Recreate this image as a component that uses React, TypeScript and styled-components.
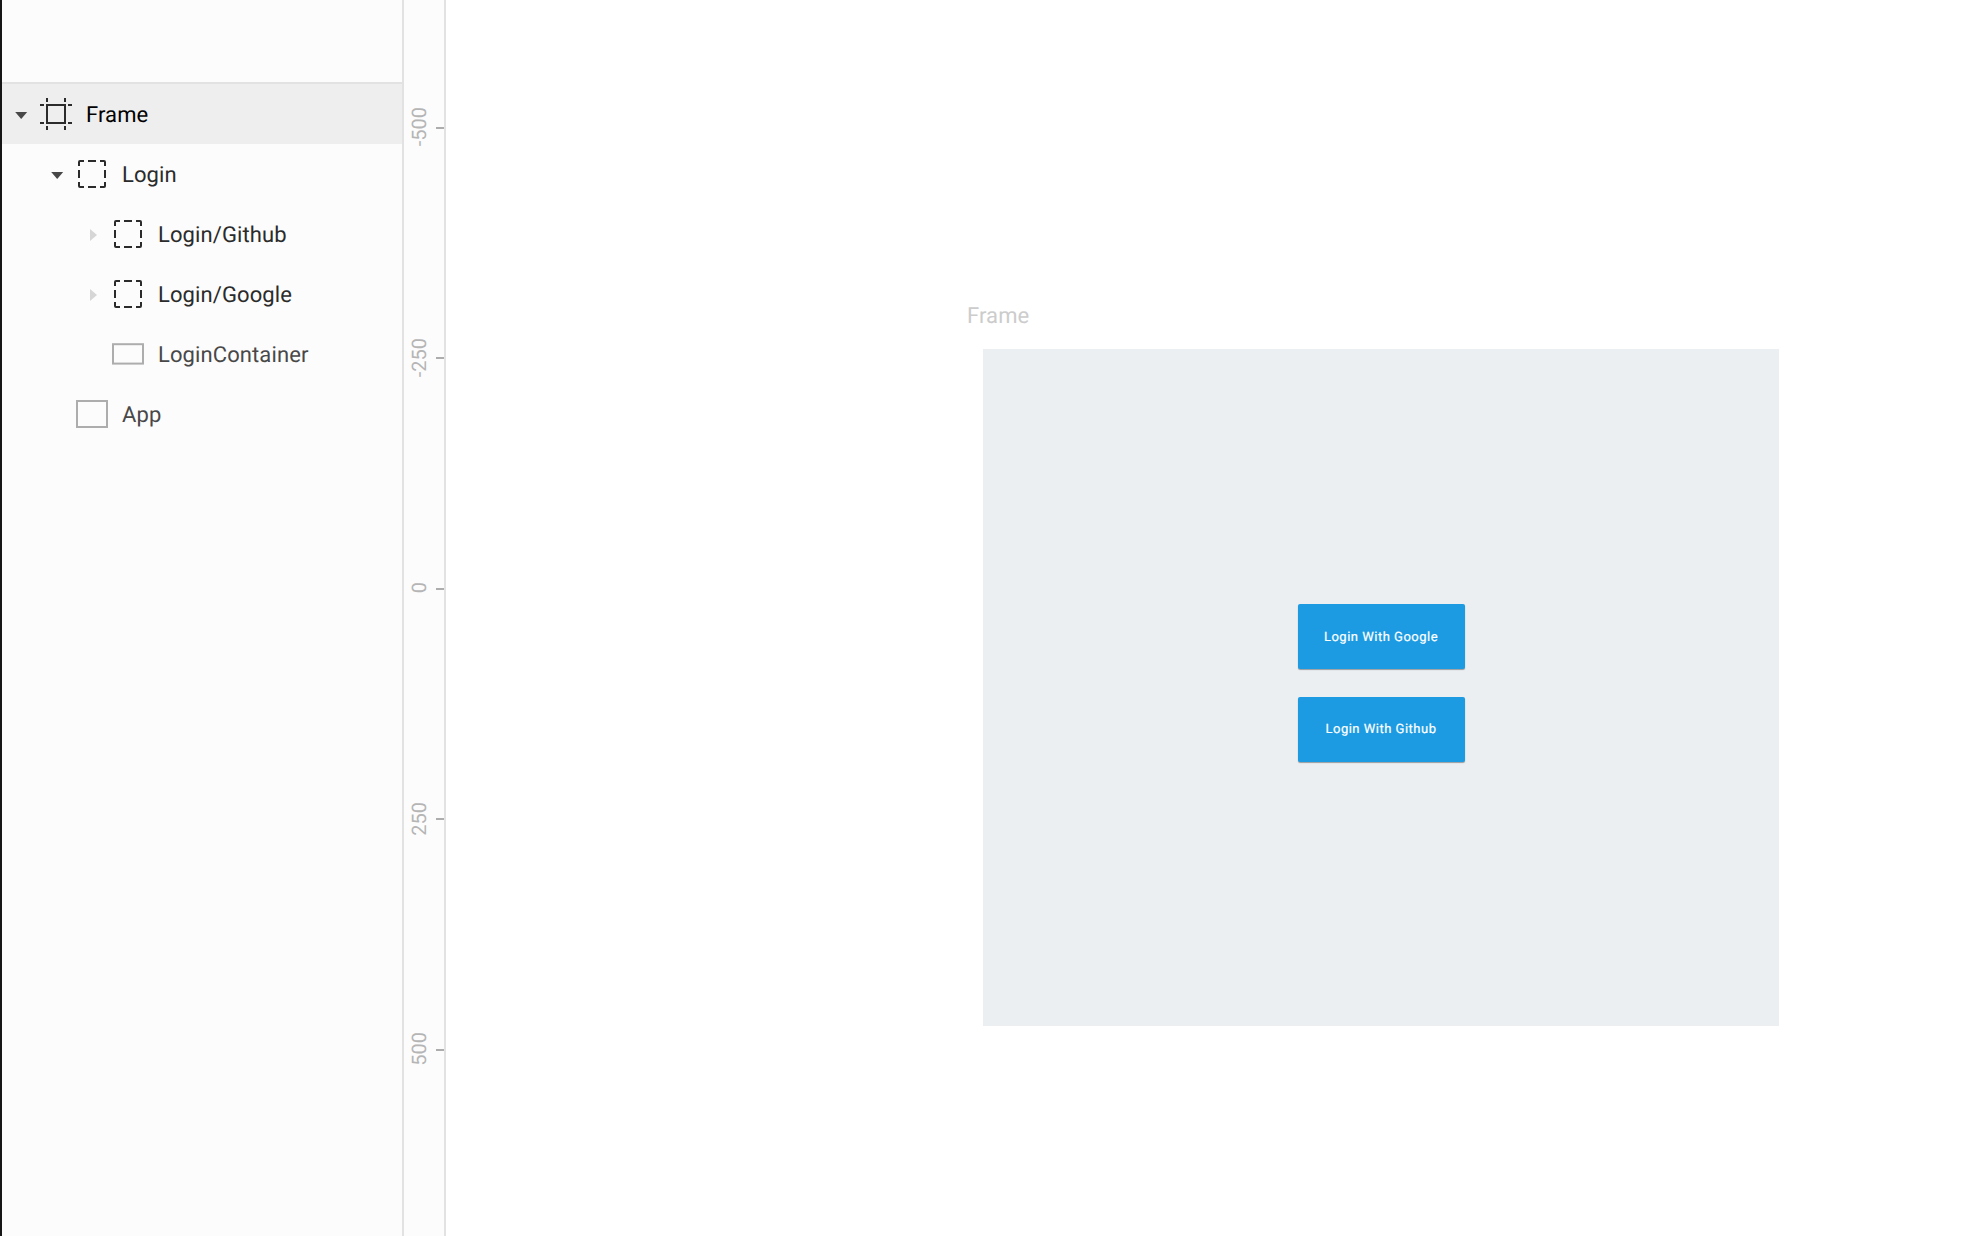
import React from 'react';
import styled, { createGlobalStyle } from 'styled-components';

const GlobalStyle = createGlobalStyle`
  *, *::before, *::after { box-sizing: border-box; }
  body {
    margin: 0;
    overflow: hidden;
    font-family: Roboto, "Liberation Sans", sans-serif;
    text-rendering: geometricPrecision;
  }
`;

const Editor = styled.div`
  display: flex;
  width: 1962px;
  height: 1236px;
  background: #fff;
  border-left: 2px solid #161616;
`;

const Sidebar = styled.aside`
  flex: 0 0 402px;
  background: #fcfcfc;
  border-right: 2px solid #e2e2e2;
`;

const SidebarHeader = styled.header`
  height: 84px;
  border-bottom: 2px solid #e2e2e2;
`;

const Row = styled.div<{ $depth: number; $selected?: boolean; $color: string }>`
  display: flex;
  align-items: center;
  height: 60px;
  padding-left: ${({ $depth }) => 12 + $depth * 36}px;
  background: ${({ $selected }) => ($selected ? '#eeeeee' : 'transparent')};
  color: ${({ $color }) => $color};
  font-size: 22px;
  line-height: 26px;
  letter-spacing: 0.1px;
`;

const LayerName = styled.span`
  display: block;
  padding-top: 4px;
`;

const CaretSlot = styled.span`
  display: flex;
  flex: 0 0 26px;
  height: 32px;
`;

const IconSlot = styled.span`
  display: flex;
  flex: 0 0 32px;
  height: 32px;
  margin-right: 14px;
`;

const Ruler = styled.div`
  flex: 0 0 42px;
  padding-top: 12.7px;
  background: #fcfcfc;
  border-right: 2px solid #e2e2e2;
  overflow: hidden;
`;

const Mark = styled.div`
  display: flex;
  align-items: center;
  justify-content: space-between;
  height: 230.5px;
  padding-left: 3px;
  color: #b5b5b5;
  font-size: 20px;
  line-height: 24px;
`;

const MarkLabel = styled.span`
  padding-top: 2px;
  writing-mode: vertical-rl;
  transform: rotate(180deg);
`;

const Tick = styled.span`
  width: 8px;
  height: 2px;
  background: #adadad;
`;

const Canvas = styled.main`
  flex: 1;
  padding: 304px 0 0 521px;
`;

const FrameLabel = styled.div`
  height: 45px;
  color: #cccccc;
  font-size: 22px;
  line-height: 26px;
  letter-spacing: 0.1px;
`;

const Frame = styled.section`
  display: flex;
  flex-direction: column;
  align-items: center;
  gap: 27.3px;
  width: 796px;
  height: 677px;
  margin-left: 16px;
  padding-top: 255.3px;
  background: #ebeff2;
`;

const LoginButton = styled.button`
  display: block;
  width: 167px;
  height: 65px;
  padding: 2px 0 0;
  border: 0;
  border-radius: 2px;
  background: #1c9be3;
  box-shadow: 0 1px 1px rgba(0, 0, 0, 0.35);
  color: #fff;
  font: 400 13px/16px Roboto, "Liberation Sans", sans-serif;
  letter-spacing: 0.5px;
  text-rendering: geometricPrecision;
  -webkit-text-stroke: 0.2px #fff;
  white-space: nowrap;
`;

type Kind = 'frame' | 'group' | 'wide' | 'tall';
type Caret = 'open' | 'closed' | 'none';

function CaretIcon({ state }: { state: Caret }) {
  return (
    <svg width="26" height="32" viewBox="0 0 26 32">
      {state === 'open' && <path d="M1.2 14H13.2L7.2 21Z" fill="#484848" />}
      {state === 'closed' && <path d="M4 11V23L11 17Z" fill="#d6d6d6" />}
    </svg>
  );
}

function LayerIcon({ kind }: { kind: Kind }) {
  return (
    <svg width="32" height="32" viewBox="0 0 32 32" fill="none" strokeWidth="2">
      {kind === 'frame' && (
        <path
          stroke="#2b2b2b"
          d="M7 7H25V25H7ZM7 0V4M25 0V4M7 28V32M25 28V32M0 7H4M28 7H32M0 25H4M28 25H32"
        />
      )}
      {kind === 'group' && (
        <path
          stroke="#2b2b2b"
          d="M3 8V4Q3 3 4 3H8M12 3H20M24 3H28Q29 3 29 4V8M29 12V20M29 24V28Q29 29 28 29H24M20 29H12M8 29H4Q3 29 3 28V24M3 20V12"
        />
      )}
      {kind === 'wide' && <rect x="1" y="6.2" width="30" height="19.4" stroke="#adadad" />}
      {kind === 'tall' && <rect x="1" y="3" width="30" height="26" stroke="#adadad" />}
    </svg>
  );
}

const layers: { name: string; depth: number; kind: Kind; caret: Caret; color: string }[] = [
  { name: 'Frame', depth: 0, kind: 'frame', caret: 'open', color: '#000000' },
  { name: 'Login', depth: 1, kind: 'group', caret: 'open', color: '#2b2b2b' },
  { name: 'Login/Github', depth: 2, kind: 'group', caret: 'closed', color: '#2b2b2b' },
  { name: 'Login/Google', depth: 2, kind: 'group', caret: 'closed', color: '#2b2b2b' },
  { name: 'LoginContainer', depth: 2, kind: 'wide', caret: 'none', color: '#484848' },
  { name: 'App', depth: 1, kind: 'tall', caret: 'none', color: '#484848' },
];

const marks = ['-500', '-250', '0', '250', '500'];

export default function App() {
  return (
    <>
      <GlobalStyle />
      <Editor>
        <Sidebar>
          <SidebarHeader />
          {layers.map((layer) => (
            <Row
              key={layer.name}
              $depth={layer.depth}
              $selected={layer.name === 'Frame'}
              $color={layer.color}
            >
              <CaretSlot>
                <CaretIcon state={layer.caret} />
              </CaretSlot>
              <IconSlot>
                <LayerIcon kind={layer.kind} />
              </IconSlot>
              <LayerName>{layer.name}</LayerName>
            </Row>
          ))}
        </Sidebar>
        <Ruler>
          {marks.map((mark) => (
            <Mark key={mark}>
              <MarkLabel>{mark}</MarkLabel>
              <Tick />
            </Mark>
          ))}
        </Ruler>
        <Canvas>
          <FrameLabel>Frame</FrameLabel>
          <Frame>
            <LoginButton>Login With Google</LoginButton>
            <LoginButton>Login With Github</LoginButton>
          </Frame>
        </Canvas>
      </Editor>
    </>
  );
}
